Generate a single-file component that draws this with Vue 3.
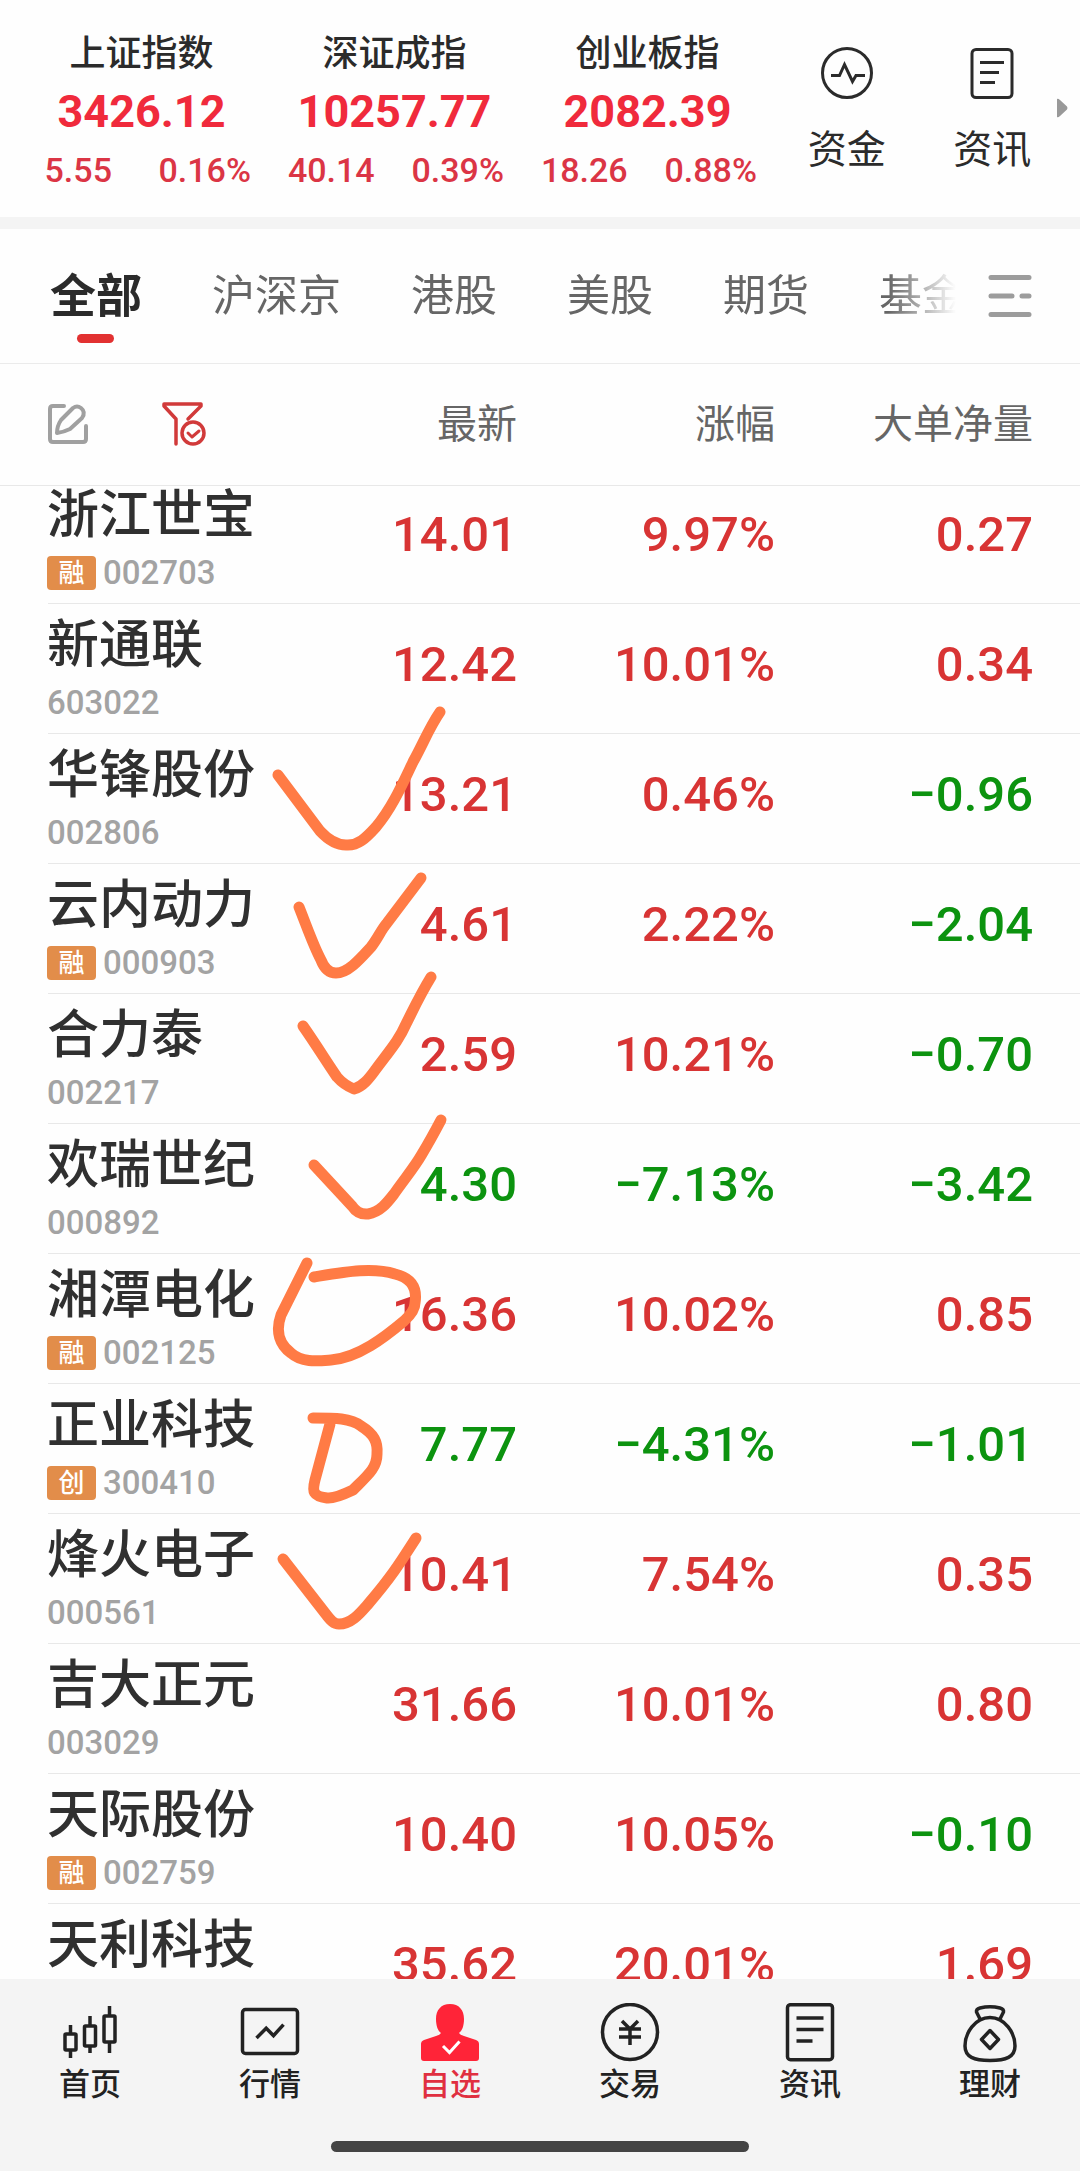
<script setup>
import { ref } from 'vue'

const indices = [
  { name: '上证指数', value: '3426.12', diff: '5.55', pct: '0.16%' },
  { name: '深证成指', value: '10257.77', diff: '40.14', pct: '0.39%' },
  { name: '创业板指', value: '2082.39', diff: '18.26', pct: '0.88%' },
]

const tabs = ['全部', '沪深京', '港股', '美股', '期货', '基金']
const activeTab = ref('全部')

const stocks = [
  { name: '浙江世宝', tag: '融', code: '002703', price: '14.01', pct: '9.97%', net: '0.27' },
  { name: '新通联', code: '603022', price: '12.42', pct: '10.01%', net: '0.34' },
  { name: '华锋股份', code: '002806', price: '13.21', pct: '0.46%', net: '−0.96' },
  { name: '云内动力', tag: '融', code: '000903', price: '4.61', pct: '2.22%', net: '−2.04' },
  { name: '合力泰', code: '002217', price: '2.59', pct: '10.21%', net: '−0.70' },
  { name: '欢瑞世纪', code: '000892', price: '4.30', pct: '−7.13%', net: '−3.42' },
  { name: '湘潭电化', tag: '融', code: '002125', price: '16.36', pct: '10.02%', net: '0.85' },
  { name: '正业科技', tag: '创', code: '300410', price: '7.77', pct: '−4.31%', net: '−1.01' },
  { name: '烽火电子', code: '000561', price: '10.41', pct: '7.54%', net: '0.35' },
  { name: '吉大正元', code: '003029', price: '31.66', pct: '10.01%', net: '0.80' },
  { name: '天际股份', tag: '融', code: '002759', price: '10.40', pct: '10.05%', net: '−0.10' },
  { name: '天利科技', price: '35.62', pct: '20.01%', net: '1.69' },
]

const trend = (text) => (text.startsWith('−') ? 'down' : 'up')

const marks = [
  'M278 775L320 831Q333 845 346 845C358 846 366 838 376 827C392 808 402 785 413 762C424 742 429 728 440 712',
  'M299 907C307 927 313 945 321 960Q326 973 336 973C348 973 360 959 371 947C378 938 381 930 387 923L421 878',
  'M303 1026C315 1043 328 1064 337 1077Q344 1085 354 1089C364 1086 370 1077 376 1069C391 1049 399 1040 406 1024C416 1004 420 995 431 977',
  'M314 1165L352 1206Q358 1215 368 1214C380 1212 387 1203 394 1194C405 1178 414 1168 422 1154Q431 1139 441 1120',
  'M307 1263L281 1315C275 1332 280 1345 291 1353C302 1363 318 1361 331 1360C358 1358 385 1337 404 1321Q415 1311 415 1303C418 1284 407 1277 395 1274C372 1267 345 1272 314 1277',
  'M313 1418C335 1418 351 1418 361 1426C374 1434 378 1442 377 1454C377 1468 368 1475 353 1490Q334 1499 327 1498C313 1496 312 1492 315 1480L330 1424',
  'M283 1559L325 1613C331 1621 334 1624 339 1624C352 1624 361 1612 369 1603C392 1576 400 1563 416 1538',
]
</script>

<template>
  <div class="app">
    <header class="summary">
      <div class="indices">
        <section v-for="item in indices" :key="item.name" class="index">
          <h2>{{ item.name }}</h2>
          <strong>{{ item.value }}</strong>
          <p><span>{{ item.diff }}</span><span>{{ item.pct }}</span></p>
        </section>
      </div>
      <div class="shortcuts">
        <button type="button">
          <svg width="52" height="52" viewBox="0 0 52 52" fill="none" stroke="#2b2b2b" stroke-width="3">
            <circle cx="26" cy="26" r="24.5" />
            <path d="M10 28.5h8.500l5-11 8 17 3.500-6H44" />
          </svg>
          资金
        </button>
        <button type="button">
          <svg width="52" height="52" viewBox="0 0 52 52" fill="none" stroke="#2b2b2b" stroke-width="3">
            <rect x="6" y="2.500" width="40" height="48" rx="4" />
            <path d="M14 15.500h24M14 25.500h19M14 35.500h15" />
          </svg>
          资讯
        </button>
      </div>
      <svg class="more" width="11" height="20" viewBox="0 0 11 20"><path d="M0 1Q1 0 3 2L10 8.500Q11 10 10 11.500L3 18Q1 20 0 19Z" fill="#999" /></svg>
    </header>

    <nav class="tabs">
      <div class="tab-strip">
        <button
          v-for="tab in tabs"
          :key="tab"
          type="button"
          :class="{ active: tab === activeTab }"
          @click="activeTab = tab"
        >{{ tab }}</button>
      </div>
      <button type="button" class="menu" aria-label="菜单">
        <svg width="44" height="44" viewBox="0 0 44 44" stroke="#9c9c9c" stroke-width="5" stroke-linecap="round">
          <path d="M3 3.500h38M3 22h21M34 22h7M3 40.500h38" />
        </svg>
      </button>
    </nav>

    <main class="list">
      <table>
        <colgroup><col><col class="mid"><col class="mid"><col class="last"></colgroup>
        <thead>
          <tr>
            <th scope="col" class="tool-cell">
              <div class="tools">
                <button type="button" aria-label="编辑">
                  <svg width="44" height="44" viewBox="0 0 44 44" fill="none" stroke="#a0a0a0" stroke-width="4" stroke-linecap="round" stroke-linejoin="round">
                    <path d="M16 4H5Q2 4 2 7V37Q2 40 5 40H35Q38 40 38 37V24" />
                    <path d="M9 31Q9 24 13 18L25 6Q29 3 33 6Q38 10 34 16L22 27Q16 30 9 31Z" />
                  </svg>
                </button>
                <button type="button" aria-label="筛选">
                  <svg width="46" height="44" viewBox="0 0 46 44" fill="none" stroke="#d13a3a" stroke-width="3.500" stroke-linecap="round" stroke-linejoin="round">
                    <path d="M14 42V17L2 4V2H39V4L26 17" />
                    <circle cx="31" cy="31" r="11" />
                    <path d="M26 31l4 4 7-6" stroke-width="3" />
                  </svg>
                </button>
              </div>
            </th>
            <th scope="col">最新</th>
            <th scope="col">涨幅</th>
            <th scope="col">大单净量</th>
          </tr>
        </thead>
        <tbody>
          <tr v-for="stock in stocks" :key="stock.name">
            <td class="stock">
              <div class="name">{{ stock.name }}</div>
              <div class="meta"><span v-if="stock.tag" class="tag">{{ stock.tag }}</span><span v-if="stock.code" class="code">{{ stock.code }}</span></div>
            </td>
            <td :class="trend(stock.pct)">{{ stock.price }}</td>
            <td :class="trend(stock.pct)">{{ stock.pct }}</td>
            <td :class="trend(stock.net)">{{ stock.net }}</td>
          </tr>
        </tbody>
      </table>
      <!-- Hand-drawn marks over the watch list -->
      <svg class="marks" width="1080" height="1615" viewBox="0 364 1080 1615" fill="none" stroke="#ff7b45" stroke-width="11" stroke-linecap="round" stroke-linejoin="round">
        <path v-for="(mark, i) in marks" :key="i" :d="mark" />
      </svg>
    </main>

    <footer class="bottom">
      <nav class="dock">
        <a href="#home">
          <svg width="60" height="60" viewBox="0 0 60 60" fill="none" stroke="#222" stroke-width="3.500">
            <rect x="5" y="31" width="11" height="16" rx="1" /><path d="M10.500 22v9M10.500 47v8" />
            <rect x="24.500" y="23" width="11" height="20" rx="1" /><path d="M30 13v10M30 43v7" />
            <rect x="44" y="13" width="11" height="26" rx="1" /><path d="M49.500 3v10M49.500 39v11" />
          </svg>
          首页
        </a>
        <a href="#market">
          <svg width="60" height="60" viewBox="0 0 60 60" fill="none" stroke="#222" stroke-width="3.500">
            <rect x="2.500" y="6.500" width="55" height="44" rx="3" />
            <path d="M16.500 35l9.700-9.700 7.300 7.300 10-11" />
          </svg>
          行情
        </a>
        <a href="#watch" class="current">
          <svg width="60" height="60" viewBox="0 0 60 60">
            <path d="M30 1C21 1 16 7 16 16C16 23 18 28 21 30Q20 32 16 33L4 37Q1 38 1 41V55Q1 58 4 58H56Q59 58 59 55V41Q59 38 56 37L44 33Q40 32 39 30C42 28 44 23 44 16C44 7 39 1 30 1Z" fill="#ff2438" />
            <path d="M23 43l6.500 6.500 10-11" fill="none" stroke="#fff" stroke-width="3" />
          </svg>
          自选
        </a>
        <a href="#trade">
          <svg width="60" height="60" viewBox="0 0 60 60" fill="none" stroke="#222" stroke-width="3.500">
            <circle cx="30" cy="29" r="27.500" />
            <path d="M22 18l8 8 8-8M19 26h22M19 34h22M30 26v16" />
          </svg>
          交易
        </a>
        <a href="#news">
          <svg width="60" height="60" viewBox="0 0 60 60" fill="none" stroke="#222" stroke-width="3.500">
            <rect x="7.500" y="1.700" width="45" height="55" rx="3" />
            <path d="M16.500 15h27M16.500 26.500h27M16.500 38h16" />
          </svg>
          资讯
        </a>
        <a href="#wealth">
          <svg width="60" height="60" viewBox="0 0 60 60" fill="none" stroke="#222" stroke-width="3.500" stroke-linejoin="round">
            <path d="M20 16L16.500 9Q16 6 20 5Q30 2.500 40 5Q44 6 43.500 9L40 16" />
            <path d="M30 14.500C15 14.500 5 30 5 43C5 54 14 57.500 30 57.500S55 54 55 43C55 30 45 14.500 30 14.500Z" />
            <path d="M30 27.500l8.500 9-8.500 9-8.500-9Z" />
          </svg>
          理财
        </a>
      </nav>
      <div class="home-bar"></div>
    </footer>
  </div>
</template>

<style>
body {
  margin: 0;
  background: #fff;
}
</style>

<style scoped>
.app {
  display: flex;
  flex-direction: column;
  height: 100vh;
  overflow: hidden;
  background: #fefefe;
  color: #2b2b2b;
  font-family: Roboto, "Noto Sans CJK SC", sans-serif;
}

button {
  padding: 0;
  border: 0;
  background: none;
  color: inherit;
  font: inherit;
}

svg {
  display: block;
}

.summary {
  display: flex;
  position: relative;
  padding: 32px 15px 26px;
  border-bottom: 12px solid #f4f4f4;
}

.indices {
  display: flex;
  flex: 759;
}

.index {
  flex: 1;
  text-align: center;
}

.index h2 {
  margin: 0;
  font-size: 36px;
  font-weight: 500;
  line-height: 44px;
}

.index strong {
  display: block;
  padding: 8px 0 9px;
  color: #f02a3c;
  font-size: 45px;
  font-weight: 700;
  line-height: 56px;
}

.index p {
  display: flex;
  margin: 0;
  color: #db3545;
  font-size: 34px;
  font-weight: 500;
  line-height: 42px;
}

.index span {
  flex: 1;
}

.shortcuts {
  display: flex;
  flex: 291;
}

.shortcuts button {
  display: flex;
  flex: 1;
  flex-direction: column;
  align-items: center;
  gap: 25px;
  padding-top: 15px;
  font-size: 39px;
  line-height: 52px;
}

.more {
  position: absolute;
  top: 98px;
  right: 12px;
}

.tabs {
  display: flex;
  align-items: center;
  height: 134px;
  padding: 0 48px 0 50px;
  border-bottom: 1px solid #ebebeb;
}

.tab-strip {
  display: flex;
  flex: 1;
  gap: 70px;
  min-width: 0;
  margin-right: 32px;
  overflow: hidden;
  color: #666;
  font-size: 43px;
  line-height: 134px;
  white-space: nowrap;
  mask-image: linear-gradient(to left, transparent 0, #000 68px);
}

.tab-strip button {
  flex: none;
}

.tab-strip .active {
  position: relative;
  color: #2b2b2b;
  font-size: 46px;
  font-weight: 700;
}

.tab-strip .active::after {
  position: absolute;
  bottom: 20px;
  left: 50%;
  width: 37px;
  height: 9px;
  margin-left: -19px;
  border-radius: 5px;
  background: #e23131;
  content: "";
}

.list {
  position: relative;
  flex: 1;
  min-height: 0;
  overflow: hidden;
}

table {
  width: 100%;
  border-collapse: collapse;
  table-layout: fixed;
}

.mid {
  width: 258px;
}

.last {
  width: 305px;
}

th,
td {
  padding: 0;
  text-align: right;
}

th:last-child,
td:last-child {
  padding-right: 47px;
}

th {
  height: 121px;
  padding-bottom: 6px;
  box-sizing: border-box;
  border-bottom: 1px solid #e8e8e8;
  color: #666;
  font-size: 40px;
  font-weight: 400;
}

.tool-cell {
  padding-bottom: 0;
}

.tools {
  display: flex;
  gap: 70px;
  padding-left: 48px;
}

tbody tr {
  height: 130px;
  background: linear-gradient(#e8e8e8, #e8e8e8) 48px 100% / 100% 1px no-repeat;
}

/* The list is scrolled slightly, so its first row is cut by the header */
tbody tr:first-child {
  height: 118px;
}

td {
  padding-bottom: 39px;
  font-size: 49px;
  font-weight: 500;
  line-height: 60px;
  vertical-align: bottom;
}

.stock {
  padding: 0 0 13px 47px;
  text-align: left;
}

.name {
  color: #303030;
  font-size: 52px;
  line-height: 60px;
  white-space: nowrap;
}

.meta {
  display: flex;
  align-items: center;
  gap: 7px;
  margin-top: 9px;
  height: 36px;
}

.tag {
  width: 49px;
  border-radius: 4px;
  background: #e28d4a;
  color: #fff;
  font-size: 26px;
  line-height: 34px;
  text-align: center;
}

.code {
  color: #a3a3a3;
  font-size: 33px;
  font-weight: 500;
  line-height: 36px;
}

.up {
  color: #d83434;
}

.down {
  color: #0c930f;
}

.marks {
  position: absolute;
  top: 0;
  left: 0;
  pointer-events: none;
}

.bottom {
  height: 192px;
  background: #f4f4f4;
}

.dock {
  display: flex;
  padding-top: 24px;
}

.dock a {
  display: flex;
  flex: 1;
  flex-direction: column;
  align-items: center;
  gap: 2px;
  color: #222;
  font-size: 31px;
  font-weight: 500;
  line-height: 40px;
  text-decoration: none;
}

.dock .current {
  color: #e02f40;
}

.home-bar {
  width: 418px;
  height: 11px;
  margin: 36px auto 0;
  border-radius: 6px;
  background: #444;
}
</style>
